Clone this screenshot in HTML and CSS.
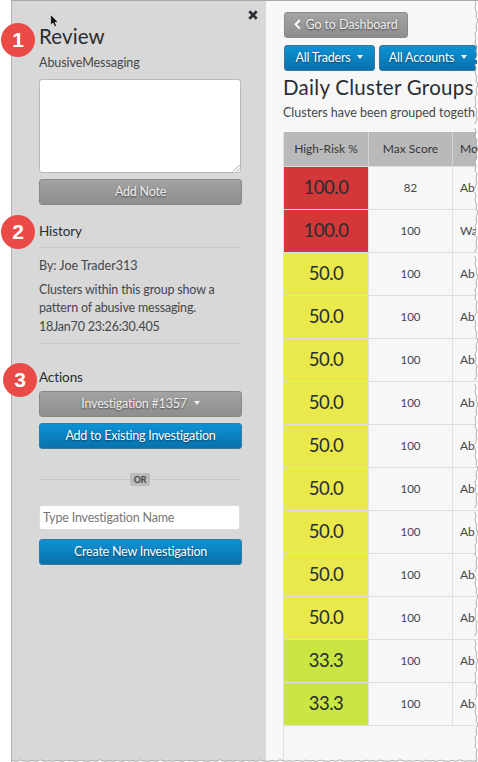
FILE: index.html
```
<!DOCTYPE html>
<html lang="en">
<head>
<meta charset="utf-8">
<title>Daily Cluster Groups</title>
<link rel="stylesheet" href="styles.css">
</head>
<body>
<div class="app">
  <aside class="sidebar">
    <svg class="pointer" width="9" height="14" viewBox="0 0 9 14"><path d="M.6.5v10.7l2.5-2.2 1.6 3.8 2-.9-1.7-3.6h3.3z" fill="#111" stroke="#eee" stroke-width=".7"/></svg>
    <svg class="close" width="10" height="10" viewBox="0 0 10 10"><path d="M1.3 1.3l7.4 7.4M8.7 1.3L1.3 8.7" stroke="#2b2f33" stroke-width="2.7"/></svg>
    <h1 class="title review"><span class="badge badge-1">1</span>Review</h1>
    <p class="model">AbusiveMessaging</p>
    <div class="note"><svg width="8" height="8" viewBox="0 0 8 8"><path d="M1 7.5L7.5 1M4.5 7.5l3-3" stroke="#888" stroke-width=".8"/></svg></div>
    <div class="btn gray wide add-note">Add Note</div>
    <h2 class="history"><span class="badge badge-2">2</span>History</h2>
    <div class="entry">
      <p class="by">By: Joe Trader313</p>
      <p class="message">Clusters within this group show a<br>pattern of abusive messaging.</p>
      <p class="time">18Jan70 23:26:30.405</p>
    </div>
    <h2 class="actions"><span class="badge badge-3">3</span>Actions</h2>
    <div class="btn gray wide select">Investigation #1357 <i class="caret"></i></div>
    <div class="btn blue wide existing">Add to Existing Investigation</div>
    <div class="divider"><span>OR</span></div>
    <input class="name" placeholder="Type Investigation Name">
    <div class="btn blue wide create">Create New Investigation</div>
  </aside>
  <main class="main">
    <div class="btn gray back"><svg width="7" height="11" viewBox="0 0 7 11"><path d="M5.8 1L1.6 5.3l4.2 4.3" fill="none" stroke="#fff" stroke-width="1.9"/></svg>Go to Dashboard</div>
    <div class="filters">
      <div class="btn blue traders">All Traders <i class="caret"></i></div>
      <div class="btn blue accounts">All Accounts <i class="caret"></i></div>
    </div>
    <h1 class="title daily">Daily Cluster Groups</h1>
    <p class="sub">Clusters have been grouped togeth</p>
    <div class="table">
      <div class="row head"><div>High-Risk %</div><div>Max Score</div><div>Mo</div></div>
      <div class="row red"><div>100.0</div><div>82</div><div>Ab</div></div>
      <div class="row red"><div>100.0</div><div>100</div><div>Wa</div></div>
      <div class="row yellow"><div>50.0</div><div>100</div><div>Ab</div></div>
      <div class="row yellow"><div>50.0</div><div>100</div><div>Ab</div></div>
      <div class="row yellow"><div>50.0</div><div>100</div><div>Ab</div></div>
      <div class="row yellow"><div>50.0</div><div>100</div><div>Ab</div></div>
      <div class="row yellow"><div>50.0</div><div>100</div><div>Ab</div></div>
      <div class="row yellow"><div>50.0</div><div>100</div><div>Ab</div></div>
      <div class="row yellow"><div>50.0</div><div>100</div><div>Ab</div></div>
      <div class="row yellow"><div>50.0</div><div>100</div><div>Ab</div></div>
      <div class="row yellow"><div>50.0</div><div>100</div><div>Ab</div></div>
      <div class="row green"><div>33.3</div><div>100</div><div>Ab</div></div>
      <div class="row green"><div>33.3</div><div>100</div><div>Ab</div></div>
    </div>
  </main>
  <svg class="torn" width="478" height="762" viewBox="0 0 478 762">
    <defs>
      <pattern id="edge-v" width="6" height="64" patternUnits="userSpaceOnUse" x="473">
        <path d="M6 0H2l1 4-1 4 2 5-1 3 2 5-2 4 1 5-2 4 1 4-1 5 2 3-1 5 1 4-2 5H6z" fill="#fff"/>
        <path d="M2 0l1 4-1 4 2 5-1 3 2 5-2 4 1 5-2 4 1 4-1 5 2 3-1 5 1 4-2 5" fill="none" stroke="#999" stroke-width=".8"/>
      </pattern>
      <pattern id="edge-h" width="60" height="3" patternUnits="userSpaceOnUse" y="759">
        <path d="M0 3V2l3 .3 3-1.3 3 1 4-.5 3 1 4-1.5 4 1 5 .3 3-1 4 1 4-1.5 5 1.5 4-.6 4 .6 4-1 3 .7V3z" fill="#fff"/>
        <path d="M0 2l3 .3 3-1.3 3 1 4-.5 3 1 4-1.5 4 1 5 .3 3-1 4 1 4-1.5 5 1.5 4-.6 4 .6 4-1 3 .7" fill="none" stroke="#999" stroke-width=".8"/>
      </pattern>
    </defs>
    <rect x="12" y="759" width="466" height="3" fill="url(#edge-h)"/>
    <rect x="473" y="1" width="5" height="761" fill="url(#edge-v)"/>
  </svg>
</div>
</body>
</html>
```
FILE: styles.css
```
* { box-sizing: border-box; margin: 0; padding: 0; }
body { background: #fff; font-family: Lato, sans-serif; font-size: 12.5px; letter-spacing: -.22px; font-variant-ligatures: none; color: #43474b; overflow: hidden; }
.app { position: relative; display: flex; width: 478px; height: 762px; padding-left: 11px; overflow: hidden; white-space: nowrap; }
.sidebar { position: relative; width: 255px; flex: none; display: flex; flex-direction: column; padding: 23px 24px 0 27px; background: #d8d8d8; border-left: 1px solid #b0b0b0; border-top: 1px solid #a8a8a8; }
.main { flex: 1; min-width: 0; overflow: hidden; padding: 11px 0 0 18px; background: #f7f7f7; border-top: 1px solid #a8a8a8; }
.pointer { position: absolute; left: 38px; top: 13px; }
.close { position: absolute; left: 236px; top: 9px; }
.title { position: relative; font-weight: 400; font-size: 20.5px; line-height: 24px; color: #292d31; }
.review { letter-spacing: .1px; }
.badge { position: absolute; left: -38px; width: 34px; height: 34px; border-radius: 50%; background: #ea4b46; color: #fff; font: 700 21px/34px "Liberation Sans", sans-serif; letter-spacing: 0; text-align: center; }
.badge-1 { top: -1px; }
.badge-2 { top: -6px; }
.badge-3 { top: -4px; left: -36px; }
.model { line-height: 18px; margin-top: 6px; letter-spacing: -.05px; }
.note { height: 94px; width: 202px; margin-top: 7px; background: #fff; border: 1px solid #b9b9b9; border-radius: 3px; display: flex; align-items: flex-end; justify-content: flex-end; }
.btn { display: flex; align-items: center; justify-content: center; height: 26px; border-radius: 3px; color: #fff; text-shadow: 0 1px 2px rgba(0,0,0,.55); padding-bottom: 2px; }
.gray { background: linear-gradient(#a3a3a3, #8e8e8e); border: 1px solid #888; color: #eee; }
.blue { background: linear-gradient(#0d92d4, #0872ac); border: 1px solid #3c7797; }
.wide { width: 203px; flex: none; }
.caret { width: 0; height: 0; border: 3.5px solid transparent; border-top: 4px solid currentColor; border-bottom: 0; margin-left: 7px; }
.add-note { margin-top: 6px; }
h2 { position: relative; font-weight: 400; font-size: 13.5px; line-height: 20px; color: #292d31; letter-spacing: -.1px; }
.history { margin-top: 16px; }
.entry { width: 202px; margin-top: 6px; height: 97px; border-top: 1px solid #c9c9c9; border-bottom: 1px solid #c9c9c9; padding-top: 9px; line-height: 18px; }
.by { letter-spacing: 0; }
.message { margin-top: 6px; letter-spacing: -.18px; }
.time { margin-top: 1px; }
.actions { margin-top: 23px; }
.select { margin-top: 4px; }
.existing { margin-top: 6px; }
.divider { display: flex; align-items: center; width: 202px; height: 14px; margin-top: 23px; }
.divider::before, .divider::after { content: ""; flex: 1; height: 1px; background: #c6c6c6; }
.divider span { width: 20px; height: 13px; border-radius: 2px; background: #bbb; font-size: 9px; font-weight: 700; line-height: 13px; text-align: center; }
.name { width: 201px; height: 25px; margin-top: 19px; border: 1px solid #ddd; border-radius: 3px; padding: 0 3px; font: 12.5px Lato, sans-serif; letter-spacing: -.18px; font-variant-ligatures: none; background: #fff; }
.name::placeholder { color: #777; }
.create { margin-top: 9px; }
.back { width: 124px; gap: 4px; letter-spacing: -.1px; }
.filters { display: flex; gap: 4px; margin-top: 7px; width: 300px; }
.traders { width: 91px; }
.accounts { width: 98px; }
.daily { margin-top: 4px; letter-spacing: .28px; margin-left: -1px; }
.sub { line-height: 18px; margin: 5px 0 0 -1px; letter-spacing: 0; }
.table { width: 260px; margin: 10px 0 0 -1px; height: 640px; border-left: 1px solid #e2e2e2; }
.row { display: grid; grid-template-columns: 85px 84px 90px; height: 43px; }
.row > div { display: flex; align-items: center; justify-content: center; border-right: 1px solid #e0e0e0; border-bottom: 1px solid #dedede; font-size: 12px; letter-spacing: 0; padding-bottom: 2px; }
.row > div:last-child { justify-content: flex-start; padding-left: 7px; }
.row:not(.head) > div:nth-child(2) { font-size: 11.5px; }
.row:not(.head) > div:first-child { font-size: 18.5px; letter-spacing: -.5px; color: #292d31; }
.row.head { height: 35px; }
.head > div { background: #b9b9b9; border-right-color: #d6d6d6; color: #33373b; }
.red > div:first-child { background: #d33737; }
.yellow > div:first-child { background: #eae94c; }
.green > div:first-child { background: #c9e642; }
.torn { position: absolute; left: 0; top: 0; pointer-events: none; }
```
